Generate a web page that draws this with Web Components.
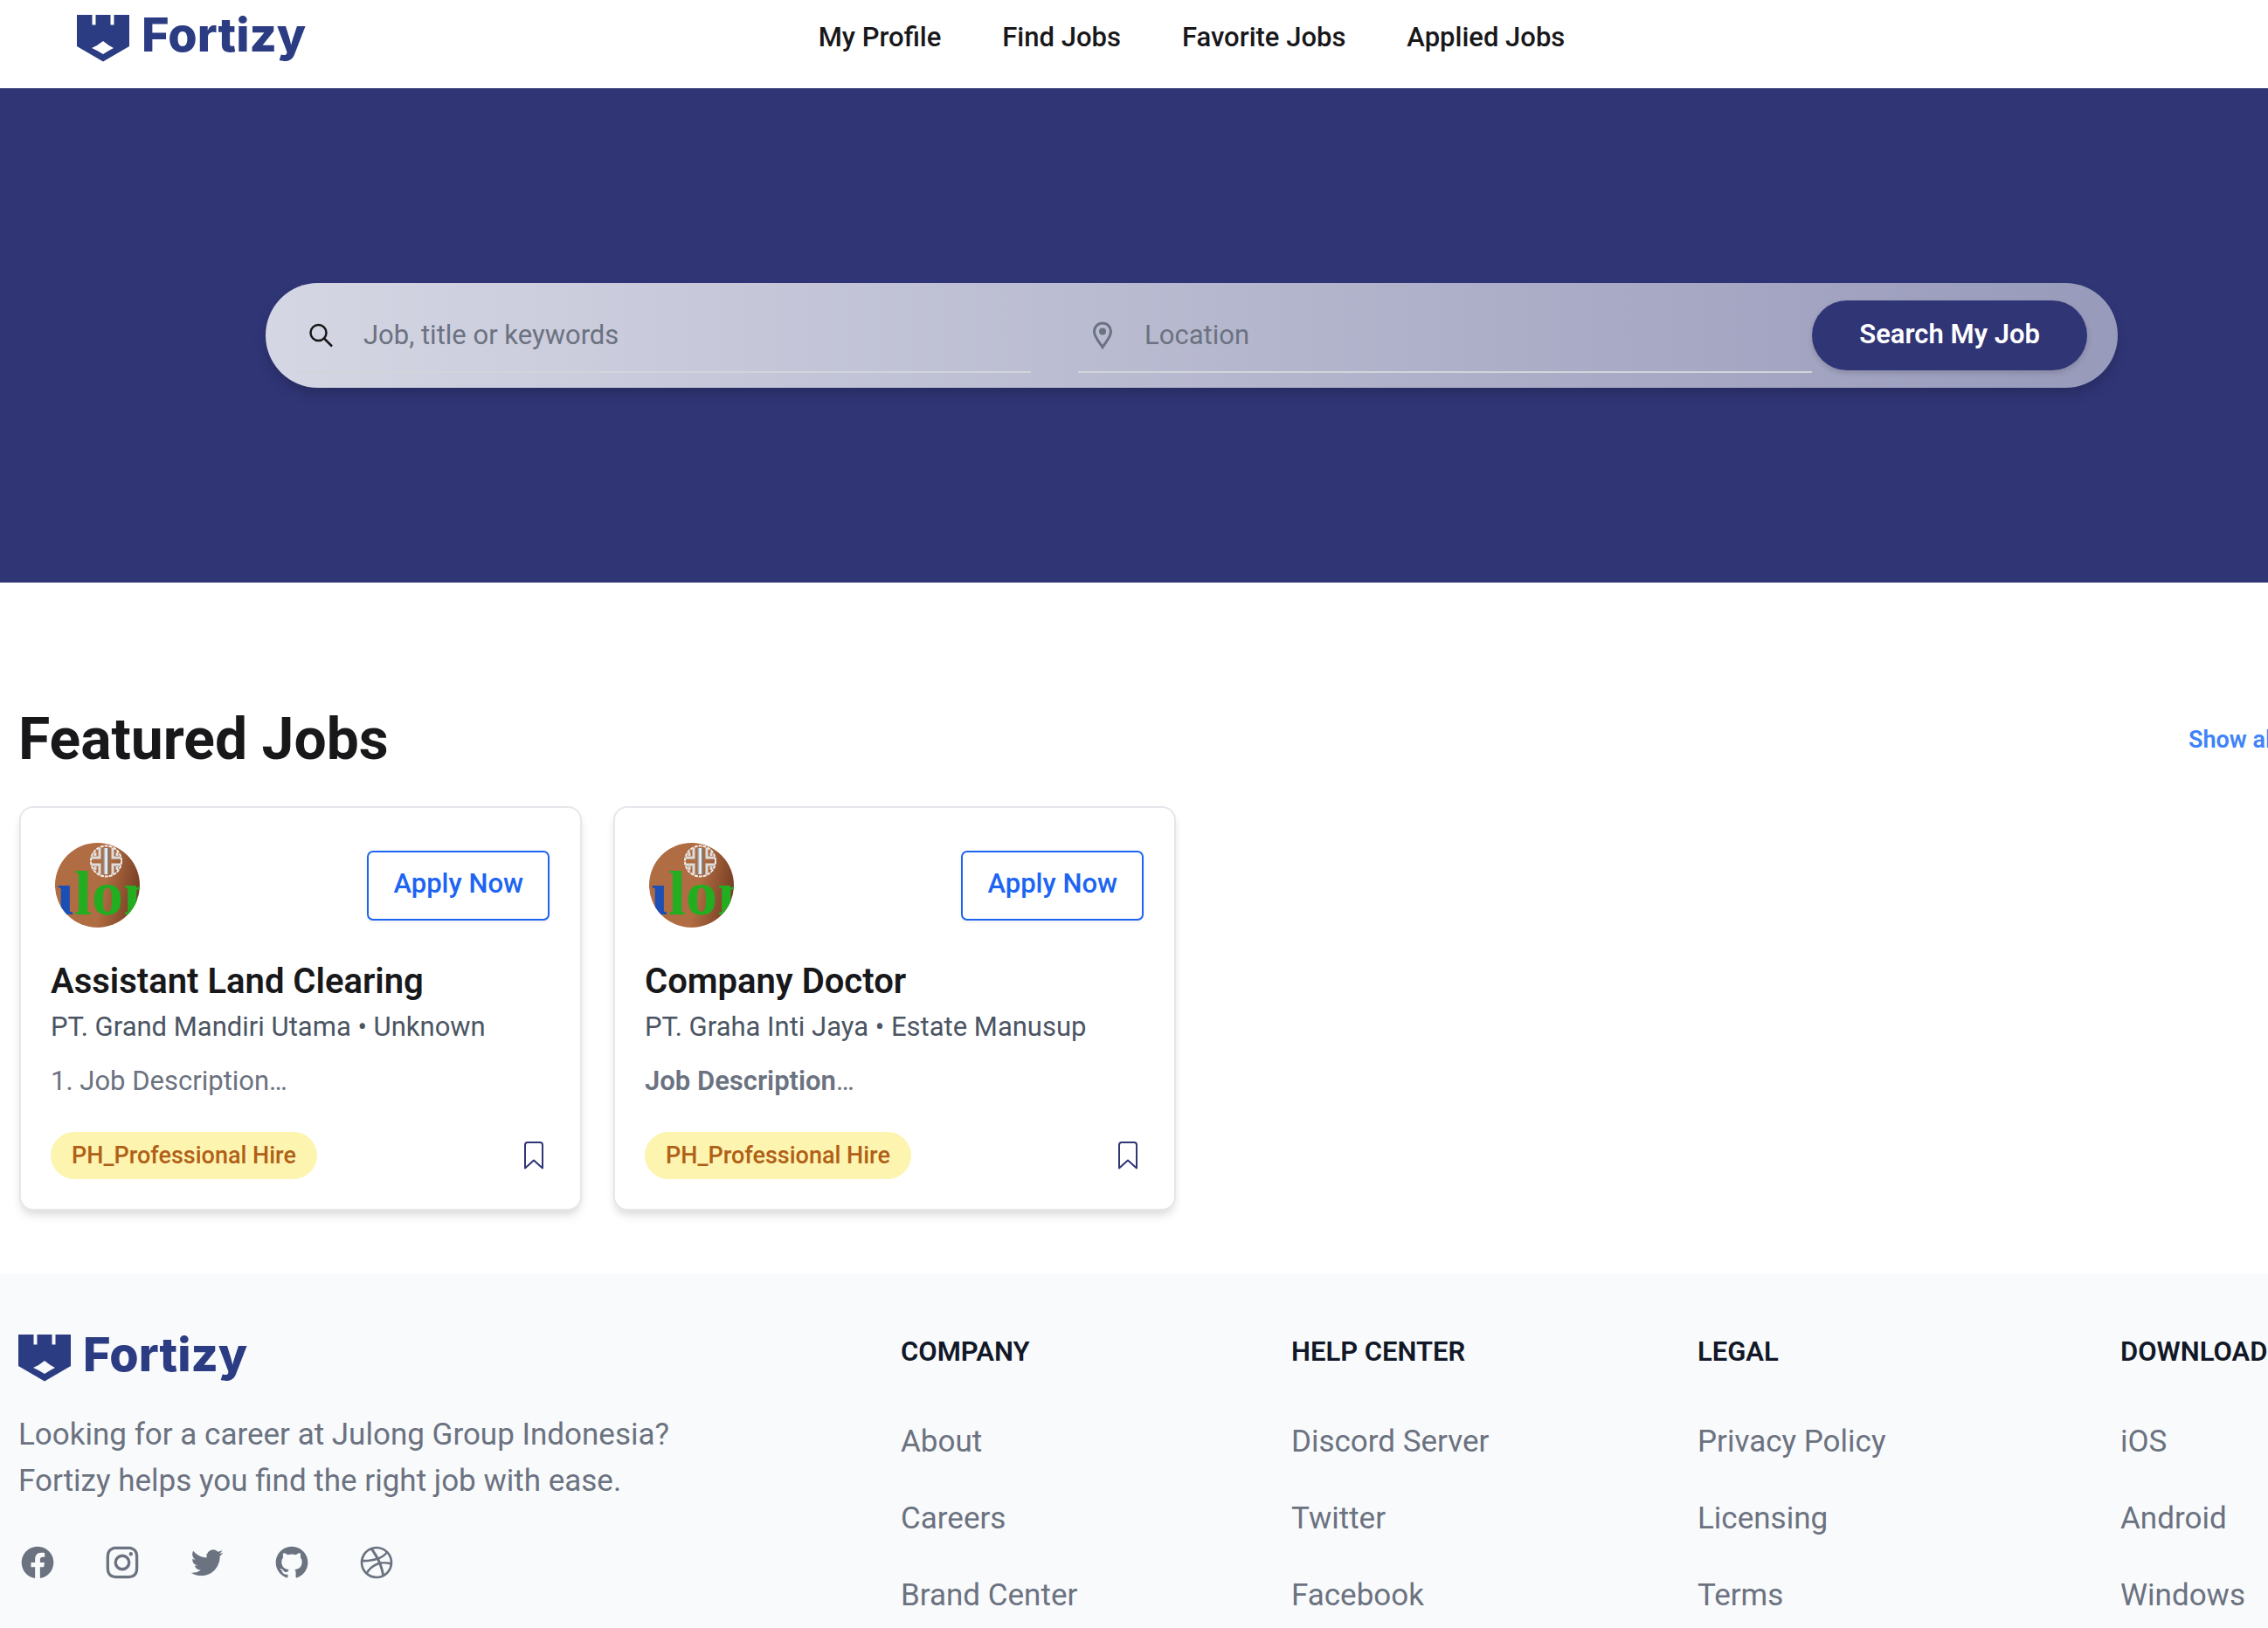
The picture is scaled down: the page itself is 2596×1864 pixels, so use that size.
<!DOCTYPE html>
<html lang="en">
<head>
<meta charset="utf-8">
<meta name="viewport" content="width=device-width, initial-scale=1">
<title>Fortizy</title>
<style>
  html { overflow: hidden; }
  body { margin: 0; background: #fff; color: #18181b; font-family: Roboto, "Liberation Sans", sans-serif; }
</style>
</head>
<body>
<fortizy-page></fortizy-page>
<script>
const define = (name, html, setup) => {
  const template = document.createElement('template');
  template.innerHTML = html;
  customElements.define(name, class extends HTMLElement {
    constructor() {
      super();
      this.attachShadow({ mode: 'open' }).append(template.content.cloneNode(true));
    }
    connectedCallback() { if (setup) setup(this, this.shadowRoot); }
  });
};

define('brand-logo', `
  <style>
    :host { display: block; }
    a { display: flex; align-items: flex-start; gap: 14px; height: 54px; color: #2b3c82; text-decoration: none;
        font: 800 54px/45px Inter, "Liberation Sans", sans-serif; }
    svg { display: block; width: 60px; height: 54px; }
  </style>
  <a href="#">
    <svg viewBox="0 0 60 54" aria-hidden="true"><path fill="currentColor" fill-rule="evenodd" d="M0 0h17.500v11.500h4V0h17v11.500h4V0H60v36L30 53.500 0 36zM17 38q7-3 13-8 6 5 12 8-6 3-12 7-6-4-13-7z"/></svg>
    <span>Fortizy</span>
  </a>`);

define('nav-link', `
  <style>
    :host { display: block; }
    a { color: #18181b; text-decoration: none; font-size: 31px; line-height: 44px; font-weight: 500; white-space: nowrap; }
  </style>
  <a href="#"><slot></slot></a>`);

define('site-header', `
  <style>
    :host { display: block; background: #fff; }
    header { display: grid; grid-template-columns: 1fr auto 1fr; align-items: center; padding: 17px 88px 30px; }
    nav { display: flex; gap: 70px; padding-bottom: 2px; }
  </style>
  <header>
    <brand-logo></brand-logo>
    <nav>
      <nav-link>My Profile</nav-link>
      <nav-link>Find Jobs</nav-link>
      <nav-link>Favorite Jobs</nav-link>
      <nav-link>Applied Jobs</nav-link>
    </nav>
  </header>`);

define('search-field', `
  <style>
    :host { display: block; flex: 1; min-width: 0; }
    label { display: flex; align-items: center; gap: 32px; height: 82px; padding: 19px 0 0 12px; border-bottom: 2px solid #d1d5db; }
    ::slotted(svg) { display: block; flex: none; width: 32px; height: 32px; }
    input { flex: 1; min-width: 0; padding: 0; border: 0; outline: 0; background: none; color: #18181b;
            font: 400 31px/48px Roboto, "Liberation Sans", sans-serif; }
    input::placeholder { color: #6b7280; opacity: 1; }
  </style>
  <label><slot></slot><input type="text"></label>`,
  (el, root) => {
    const input = root.querySelector('input');
    input.placeholder = el.getAttribute('placeholder');
    input.setAttribute('aria-label', el.getAttribute('placeholder'));
  });

define('search-hero', `
  <style>
    :host { display: block; background: #303576; padding: 223px 304px; }
    form { display: flex; align-items: center; height: 120px; padding: 0 35px 0 36px; box-sizing: border-box; border-radius: 60px;
           background: linear-gradient(to right, rgb(255 255 255 / .8), rgb(255 255 255 / .5));
           box-shadow: 0 8px 16px -2px rgb(0 0 0 / .2); }
    .fields { display: flex; flex: 1; gap: 54px; align-self: flex-start; }
    button { height: 80px; padding: 0 54px 3px; border: 0; border-radius: 40px; background: #303576; color: #fff;
             font: 600 31px/48px Roboto, "Liberation Sans", sans-serif; box-shadow: 0 3px 6px rgb(0 0 0 / .15); }
  </style>
  <form>
    <div class="fields">
      <search-field placeholder="Job, title or keywords">
        <svg viewBox="0 0 32 32" fill="none" stroke="#18181b" stroke-width="2.500"><circle cx="12.500" cy="13" r="9"/><path d="M19 19.500l9 9"/></svg>
      </search-field>
      <search-field placeholder="Location">
        <svg viewBox="0 0 32 32" fill="none" stroke="#6b7280" stroke-width="3"><path d="M16 29.500C12 23 6.500 18 6.500 11.500a9.500 9.500 0 0 1 19 0C25.500 18 20 23 16 29.500z"/><circle cx="16" cy="11.500" r="4" fill="#6b7280" stroke="none"/></svg>
      </search-field>
    </div>
    <button type="button">Search My Job</button>
  </form>`);

define('company-avatar', `
  <style>
    :host { display: block; }
    svg { display: block; width: 97px; height: 97px; border-radius: 50%; }
    text { font: 700 72px "Liberation Serif", serif; }
  </style>
  <svg viewBox="0 0 97 97" role="img" aria-label="Company logo">
    <defs>
      <linearGradient id="wood" x1="0" y1="0.300" x2="1" y2="0.500"><stop offset=".6" stop-color="#b06c42"/><stop offset="1" stop-color="#783f24"/></linearGradient>
      <linearGradient id="steel"><stop offset="0" stop-color="#777"/><stop offset=".5" stop-color="#fff"/><stop offset="1" stop-color="#555"/></linearGradient>
    </defs>
    <rect width="97" height="97" fill="url(#wood)"/>
    <g fill="none" stroke="#eee">
      <circle cx="58.500" cy="21" r="17.500" stroke-width="2" stroke-dasharray="4 1"/>
      <path stroke="#ddd" stroke-width="3" d="M51 6v11h-9M46 11v4M51 36V25h-9M46 31v-4M66 6v11h9M71 11v4M66 36V25h9M71 31v-4"/>
    </g>
    <rect x="55" y="6" width="7" height="30" fill="url(#steel)"/>
    <text x="-18" y="82"><tspan fill="#1b4fb5">u</tspan><tspan fill="#22ae20">lon</tspan></text>
  </svg>`);

define('job-card', `
  <style>
    :host { display: block; }
    article { padding: 40px 35px 34px 34px; border: 2px solid #e5e7eb; border-radius: 16px; background: #fff;
              box-shadow: 0 8px 12px -2px rgb(0 0 0 / .1), 0 4px 8px -2px rgb(0 0 0 / .06); }
    .top, .bottom { display: flex; align-items: center; justify-content: space-between; }
    .top { padding-left: 5px; }
    .apply { height: 80px; padding: 0 28px 4px; border: 2px solid #1c64f2; border-radius: 7px; background: #fff; color: #1c64f2;
             font: 500 31px/44px Roboto, "Liberation Sans", sans-serif; box-shadow: 0 2px 4px rgb(0 0 0 / .06); }
    h3 { margin: 38px 0 6px; font-size: 40px; line-height: 48px; font-weight: 600; }
    p { margin: 0; font-size: 31px; line-height: 44px; color: #4b5563; }
    .desc { margin: 18px 0 36px; color: #6b7280; }
    .badge { padding: 0 24px; border-radius: 27px; background: #fdf4b0; color: #b06016; font-size: 27px; line-height: 54px; font-weight: 500; }
    .save { display: block; padding: 0; margin-right: 7px; border: 0; background: none; }
    svg { display: block; width: 22px; height: 32px; }
  </style>
  <article>
    <div class="top"><company-avatar></company-avatar><button type="button" class="apply">Apply Now</button></div>
    <h3><slot name="title"></slot></h3>
    <p><slot name="place"></slot></p>
    <p class="desc"><slot></slot></p>
    <div class="bottom">
      <span class="badge"><slot name="badge"></slot></span>
      <button type="button" class="save" aria-label="Save job"><svg viewBox="0 0 22 32" fill="none" stroke="#303576" stroke-width="2" stroke-linejoin="round"><path d="M1 30.500V4a3 3 0 0 1 3-3h14a3 3 0 0 1 3 3v26.500l-10-9z"/></svg></button>
    </div>
  </article>`);

define('featured-jobs', `
  <style>
    :host { display: block; padding: 144px 21px 72px; }
    .head { display: flex; align-items: center; justify-content: space-between; margin-bottom: 40px; }
    h2 { margin: 0; font-size: 66px; line-height: 72px; font-weight: 700; }
    a { padding-right: 100px; color: #3f83f8; text-decoration: none; font-size: 27px; line-height: 40px; font-weight: 600; }
    .grid { display: grid; grid-template-columns: repeat(4, 1fr); gap: 36px; padding: 0 1px; }
    b { font-weight: 600; }
  </style>
  <div class="head"><h2>Featured Jobs</h2><a href="#">Show all</a></div>
  <div class="grid">
    <job-card><span slot="title">Assistant Land Clearing</span><span slot="place">PT. Grand Mandiri Utama • Unknown</span>1. Job Description…<span slot="badge">PH_Professional Hire</span></job-card>
    <job-card><span slot="title">Company Doctor</span><span slot="place">PT. Graha Inti Jaya • Estate Manusup</span><b>Job Description</b>…<span slot="badge">PH_Professional Hire</span></job-card>
  </div>`);

define('social-link', `
  <style>
    :host { display: block; }
    a { display: block; color: #6b7280; }
    svg { display: block; width: 44px; height: 44px; }
  </style>
  <a href="#"><svg viewBox="0 0 24 24" fill="currentColor" aria-hidden="true"><path fill-rule="evenodd" clip-rule="evenodd"/></svg></a>`,
  (el, root) => {
    root.querySelector('a').setAttribute('aria-label', el.getAttribute('name'));
    root.querySelector('path').setAttribute('d', socialPaths[el.getAttribute('name')]);
  });

define('link-column', `
  <style>
    :host { display: block; min-width: 0; }
    h4 { margin: 0 0 56px; color: #111827; font-size: 31px; line-height: 40px; font-weight: 600; white-space: nowrap; }
    div { display: flex; flex-direction: column; align-items: flex-start; gap: 35px; }
    ::slotted(a) { color: #6b7280; text-decoration: none; font-size: 35px; line-height: 53px; white-space: nowrap; }
  </style>
  <h4><slot name="title"></slot></h4>
  <div><slot></slot></div>`);

define('site-footer', `
  <style>
    :host { display: block; flex: 1; background: #f9fafc; }
    footer { display: grid; grid-template-columns: 1010fr 447fr 465fr 484fr 280fr; padding: 70px 21px 8px; }
    p { margin: 34px 0 45px; color: #6b7280; font-size: 35px; line-height: 53px; }
    .social { display: flex; gap: 53px; }
  </style>
  <footer>
    <div>
      <brand-logo></brand-logo>
      <p>Looking for a career at Julong Group Indonesia?<br>Fortizy helps you find the right job with ease.</p>
      <div class="social">
        <social-link name="Facebook"></social-link>
        <social-link name="Instagram"></social-link>
        <social-link name="Twitter"></social-link>
        <social-link name="GitHub"></social-link>
        <social-link name="Dribbble"></social-link>
      </div>
    </div>
    <link-column><span slot="title">COMPANY</span><a href="#">About</a><a href="#">Careers</a><a href="#">Brand Center</a></link-column>
    <link-column><span slot="title">HELP CENTER</span><a href="#">Discord Server</a><a href="#">Twitter</a><a href="#">Facebook</a></link-column>
    <link-column><span slot="title">LEGAL</span><a href="#">Privacy Policy</a><a href="#">Licensing</a><a href="#">Terms</a></link-column>
    <link-column><span slot="title">DOWNLOAD</span><a href="#">iOS</a><a href="#">Android</a><a href="#">Windows</a></link-column>
  </footer>`);

var socialPaths = {
  Facebook: 'M22 12c0-5.523-4.477-10-10-10S2 6.477 2 12c0 4.991 3.657 9.128 8.438 9.878v-6.987h-2.540V12h2.540V9.797c0-2.506 1.492-3.890 3.777-3.890 1.094 0 2.238.195 2.238.195v2.460h-1.260c-1.243 0-1.630.771-1.630 1.562V12h2.773l-.443 2.890h-2.330v6.988C18.343 21.128 22 16.991 22 12z',
  Instagram: 'M12.315 2c2.430 0 2.784.013 3.808.060 1.064.049 1.791.218 2.427.465a4.902 4.902 0 011.772 1.153 4.902 4.902 0 011.153 1.772c.247.636.416 1.363.465 2.427.048 1.067.060 1.407.060 4.123v.080c0 2.643-.012 2.987-.060 4.043-.049 1.064-.218 1.791-.465 2.427a4.902 4.902 0 01-1.153 1.772 4.902 4.902 0 01-1.772 1.153c-.636.247-1.363.416-2.427.465-1.067.048-1.407.060-4.123.060h-.080c-2.643 0-2.987-.012-4.043-.060-1.064-.049-1.791-.218-2.427-.465a4.902 4.902 0 01-1.772-1.153 4.902 4.902 0 01-1.153-1.772c-.247-.636-.416-1.363-.465-2.427-.047-1.024-.060-1.379-.060-3.808v-.630c0-2.430.013-2.784.060-3.808.049-1.064.218-1.791.465-2.427a4.902 4.902 0 011.153-1.772A4.902 4.902 0 015.450 2.525c.636-.247 1.363-.416 2.427-.465C8.901 2.013 9.256 2 11.685 2h.630zm-.081 1.802h-.468c-2.456 0-2.784.011-3.807.058-.975.045-1.504.207-1.857.344-.467.182-.800.398-1.150.748-.350.350-.566.683-.748 1.150-.137.353-.300.882-.344 1.857-.047 1.023-.058 1.351-.058 3.807v.468c0 2.456.011 2.784.058 3.807.045.975.207 1.504.344 1.857.182.466.399.800.748 1.150.350.350.683.566 1.150.748.353.137.882.300 1.857.344 1.054.048 1.370.058 4.041.058h.080c2.597 0 2.917-.010 3.960-.058.976-.045 1.505-.207 1.858-.344.466-.182.800-.398 1.150-.748.350-.350.566-.683.748-1.150.137-.353.300-.882.344-1.857.048-1.055.058-1.370.058-4.041v-.080c0-2.597-.010-2.917-.058-3.960-.045-.976-.207-1.505-.344-1.858a3.097 3.097 0 00-.748-1.150 3.098 3.098 0 00-1.150-.748c-.353-.137-.882-.300-1.857-.344-1.023-.047-1.351-.058-3.807-.058zM12 6.865a5.135 5.135 0 110 10.270 5.135 5.135 0 010-10.270zm0 1.802a3.333 3.333 0 100 6.666 3.333 3.333 0 000-6.666zm5.338-3.205a1.200 1.200 0 110 2.400 1.200 1.200 0 010-2.400z',
  Twitter: 'M8.290 20.251c7.547 0 11.675-6.253 11.675-11.675 0-.178 0-.355-.012-.530A8.348 8.348 0 0022 5.920a8.190 8.190 0 01-2.357.646 4.118 4.118 0 001.804-2.270 8.224 8.224 0 01-2.605.996 4.107 4.107 0 00-6.993 3.743 11.650 11.650 0 01-8.457-4.287 4.106 4.106 0 001.270 5.477A4.072 4.072 0 012.800 9.713v.052a4.105 4.105 0 003.292 4.022 4.095 4.095 0 01-1.853.070 4.108 4.108 0 003.834 2.850A8.233 8.233 0 012 18.407a11.616 11.616 0 006.290 1.840',
  GitHub: 'M12 2C6.477 2 2 6.484 2 12.017c0 4.425 2.865 8.180 6.839 9.504.500.092.682-.217.682-.483 0-.237-.008-.868-.013-1.703-2.782.605-3.369-1.343-3.369-1.343-.454-1.158-1.110-1.466-1.110-1.466-.908-.620.069-.608.069-.608 1.003.070 1.531 1.032 1.531 1.032.892 1.530 2.341 1.088 2.910.832.092-.647.350-1.088.636-1.338-2.220-.253-4.555-1.113-4.555-4.951 0-1.093.390-1.988 1.029-2.688-.103-.253-.446-1.272.098-2.650 0 0 .840-.270 2.750 1.026A9.564 9.564 0 0112 6.844c.850.004 1.705.115 2.504.337 1.909-1.296 2.747-1.027 2.747-1.027.546 1.379.202 2.398.100 2.651.640.700 1.028 1.595 1.028 2.688 0 3.848-2.339 4.695-4.566 4.943.359.309.678.920.678 1.855 0 1.338-.012 2.419-.012 2.747 0 .268.180.580.688.482A10.019 10.019 0 0022 12.017C22 6.484 17.522 2 12 2z',
  Dribbble: 'M12 2C6.480 2 2 6.480 2 12s4.480 10 10 10c5.510 0 10-4.480 10-10S17.510 2 12 2zm6.605 4.610a8.502 8.502 0 011.930 5.314c-.281-.054-3.101-.629-5.943-.271-.065-.141-.120-.293-.184-.445a25.416 25.416 0 00-.564-1.236c3.145-1.280 4.577-3.124 4.761-3.362zM12 3.475c2.170 0 4.154.813 5.662 2.148-.152.216-1.443 1.941-4.480 3.080-1.399-2.570-2.950-4.675-3.189-5A8.687 8.687 0 0112 3.475zm-3.633.803a53.896 53.896 0 013.167 4.935c-3.992 1.063-7.517 1.040-7.896 1.040a8.581 8.581 0 014.729-5.975zM3.453 12.010v-.260c.370.010 4.512.065 8.775-1.215.250.477.477.965.694 1.453-.109.033-.228.065-.336.098-4.404 1.420-6.747 5.303-6.942 5.629a8.522 8.522 0 01-2.190-5.705zM12 20.547a8.482 8.482 0 01-5.239-1.800c.152-.315 1.888-3.656 6.703-5.337.022-.010.033-.010.054-.022a35.318 35.318 0 011.823 6.475 8.400 8.400 0 01-3.341.684zm4.761-1.465c-.086-.520-.542-3.015-1.659-6.084 2.679-.423 5.022.271 5.314.369a8.468 8.468 0 01-3.655 5.715z'
};

define('fortizy-page', `
  <style>
    :host { display: flex; flex-direction: column; width: calc(100vw + 132px); min-height: 100vh; }
  </style>
  <site-header></site-header>
  <search-hero></search-hero>
  <featured-jobs></featured-jobs>
  <site-footer></site-footer>`);
</script>
</body>
</html>
